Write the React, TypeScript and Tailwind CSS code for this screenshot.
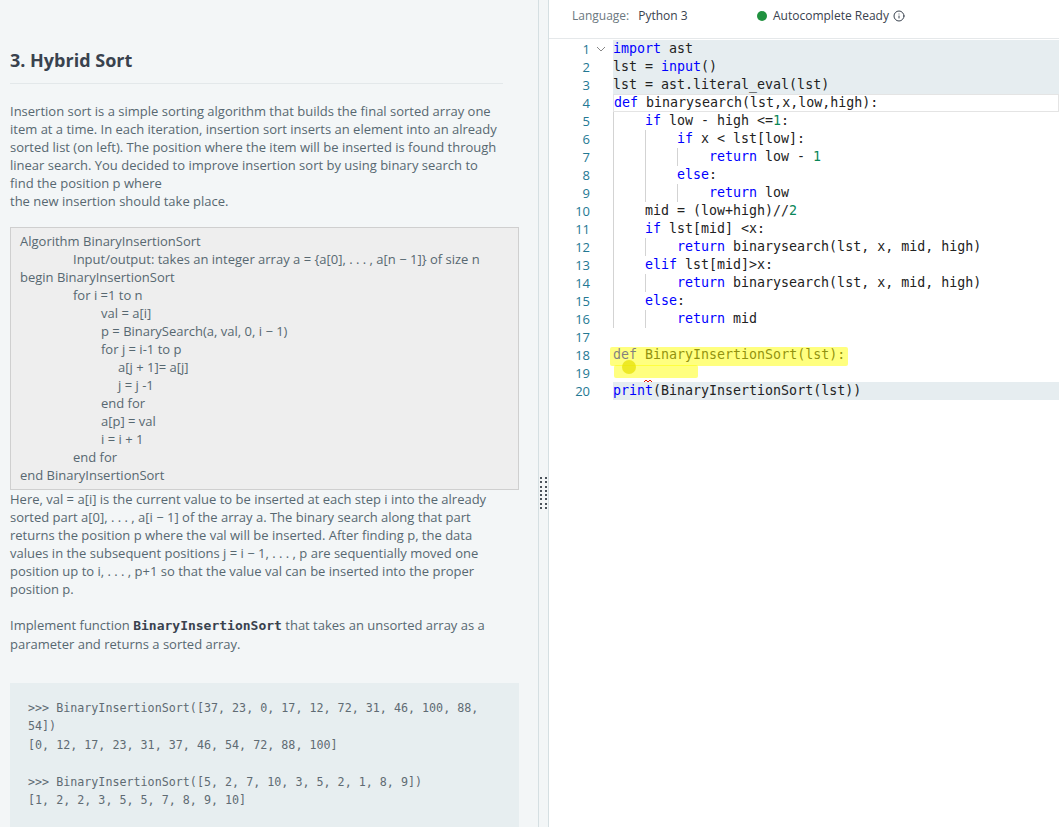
import React from "react";
import { Info } from "lucide-react";

type Seg = [string, "k" | "n" | "t"];
type Line = { indent: number; segs: Seg[]; cls?: string; fold?: boolean };

const L = (indent: number, ...segs: Seg[]): Line => ({ indent, segs });

const lines: Line[] = [
  { ...L(0, ["import", "k"], [" ast", "t"]), fold: true, cls: "bg-[#e6edf0]" },
  { ...L(0, ["lst = ", "t"], ["input", "k"], ["()", "t"]), cls: "bg-[#e6edf0]" },
  { ...L(0, ["lst = ast.literal_eval(lst)", "t"]), cls: "bg-[#e6edf0]" },
  { ...L(0, ["def", "k"], [" binarysearch(lst,x,low,high):", "t"]), cls: "border border-[#e4e4e4]" },
  L(1, ["if", "k"], [" low - high <=", "t"], ["1", "n"], [":", "t"]),
  L(2, ["if", "k"], [" x < lst[low]:", "t"]),
  L(3, ["return", "k"], [" low - ", "t"], ["1", "n"]),
  L(2, ["else", "k"], [":", "t"]),
  L(3, ["return", "k"], [" low", "t"]),
  L(1, ["mid = (low+high)//", "t"], ["2", "n"]),
  L(1, ["if", "k"], [" lst[mid] <x:", "t"]),
  L(2, ["return", "k"], [" binarysearch(lst, x, mid, high)", "t"]),
  L(1, ["elif", "k"], [" lst[mid]>x:", "t"]),
  L(2, ["return", "k"], [" binarysearch(lst, x, mid, high)", "t"]),
  L(1, ["else", "k"], [":", "t"]),
  L(2, ["return", "k"], [" mid", "t"]),
  L(0),
  L(0, ["def", "k"], [" BinaryInsertionSort(lst):", "t"]),
  L(0),
  { ...L(0, ["print", "k"], ["(BinaryInsertionSort(lst))", "t"]), cls: "bg-[#e6edf0]" },
];

const segCls = { k: "text-[#0000ff]", n: "text-[#098658]", t: "text-[#222222]" };

function Editor() {
  return (
    <div className="relative pt-[1px] font-['DejaVu_Sans_Mono',monospace] text-[13.3px] leading-[18px]">
      {lines.map((ln, i) => (
        <div key={i} className="flex h-[18px]">
          <div className="flex w-[64px] shrink-0 items-center">
            <span className="w-[41px] text-right font-['Open_Sans',sans-serif] text-[13px] text-[#237893]">
              {i + 1}
            </span>
            <span className="flex w-[23px] items-center justify-center text-[#8a8a8a]">
              {ln.fold && (
                <svg width="10" height="6" viewBox="0 0 10 6" className="ml-[-2px]">
                  <path d="M1 1 L5 5 L9 1" fill="none" stroke="#888" strokeWidth="1" />
                </svg>
              )}
            </span>
          </div>
          <div className={`flex h-[18px] flex-1 items-center whitespace-pre ${ln.cls ?? ""}`}>
            {Array.from({ length: ln.indent }).map((_, j) => (
              <span key={j} className="inline-block h-[18px] w-[32px] border-l border-[#d3d3d3]" />
            ))}
            {ln.segs.map(([t, c], j) => (
              <span key={j} className={segCls[c]}>
                {t}
              </span>
            ))}
          </div>
        </div>
      ))}
      {/* yellow marker highlight */}
      <div className="pointer-events-none absolute left-[61px] top-[308px] h-[19px] w-[238px] rounded-[2px] bg-[#ffff00]/50" />
      <div className="pointer-events-none absolute left-[65px] top-[326px] h-[13px] w-[84px] rounded-[2px] bg-[#ffff00]/50" />
      <div className="pointer-events-none absolute left-[73px] top-[321px] h-[14px] w-[14px] rounded-full bg-[#e6e000]/70" />
      <svg className="absolute left-[95px] top-[340px]" width="8" height="4" viewBox="0 0 8 4">
        <path d="M0 3 L2 1 L4 3 L6 1 L8 3" fill="none" stroke="#e51400" strokeWidth="1" />
      </svg>
    </div>
  );
}

const algo: [number, string][] = [
  [0, "Algorithm BinaryInsertionSort"],
  [53, "Input/output: takes an integer array a = {a[0], . . . , a[n − 1]} of size n"],
  [0, "begin BinaryInsertionSort"],
  [53, "for i =1 to n"],
  [81, "val = a[i]"],
  [81, "p = BinarySearch(a, val, 0, i − 1)"],
  [81, "for j = i-1 to p"],
  [98, "a[j + 1]= a[j]"],
  [98, "j = j -1"],
  [81, "end for"],
  [81, "a[p] = val"],
  [81, "i = i + 1"],
  [53, "end for"],
  [0, "end BinaryInsertionSort"],
];

export default function App() {
  return (
    <div className="flex h-[827px] w-[1059px] overflow-hidden bg-white">
      {/* Left problem panel */}
      <div className="w-[538px] shrink-0 bg-[#f3f6f7] pl-[10px] pr-[19px] font-['Open_Sans',sans-serif] text-[13px] leading-[18px] text-[#576871]">
        <h2 className="mt-[48px] text-[18px] font-bold leading-[24px] text-[#39424e]">3. Hybrid Sort</h2>
        <div className="mr-[16px] mt-[11px] border-t border-[#e3e8ea]" />
        <div className="mt-[18px] whitespace-nowrap">
          <div>Insertion sort is a simple sorting algorithm that builds the final sorted array one</div>
          <div>item at a time. In each iteration, insertion sort inserts an element into an already</div>
          <div>sorted list (on left). The position where the item will be inserted is found through</div>
          <div>linear search. You decided to improve insertion sort by using binary search to</div>
          <div>find the position p where</div>
          <div>the new insertion should take place.</div>
        </div>
        <div className="mt-[17px] whitespace-nowrap border border-[#cfcfcf] bg-[#eeeeee] pb-[5px] pl-[9px] pt-[4px]">
          {algo.map(([p, t], i) => (
            <div key={i} style={{ paddingLeft: p }}>
              {t}
            </div>
          ))}
        </div>
        <div className="whitespace-nowrap">
          <div>Here, val = a[i] is the current value to be inserted at each step i into the already</div>
          <div>sorted part a[0], . . . , a[i − 1] of the array a. The binary search along that part</div>
          <div>returns the position p where the val will be inserted. After finding p, the data</div>
          <div>values in the subsequent positions j = i − 1, . . . , p are sequentially moved one</div>
          <div>position up to i, . . . , p+1 so that the value val can be inserted into the proper</div>
          <div>position p.</div>
        </div>
        <div className="mt-[18px] whitespace-nowrap">
          <div>
            Implement function{" "}
            <code className="font-['DejaVu_Sans_Mono',monospace] text-[13px] font-bold text-[#39424e]">
              BinaryInsertionSort
            </code>{" "}
            that takes an unsorted array as a
          </div>
          <div>parameter and returns a sorted array.</div>
        </div>
        <div className="mt-[30px] h-[200px] whitespace-pre bg-[#e7eef0] pl-[18px] pt-[16px] font-['DejaVu_Sans_Mono',monospace] text-[11.7px] leading-[18.4px] text-[#5f6b73]">
          <div>{">>> BinaryInsertionSort([37, 23, 0, 17, 12, 72, 31, 46, 100, 88,"}</div>
          <div>{"54])"}</div>
          <div>{"[0, 12, 17, 23, 31, 37, 46, 54, 72, 88, 100]"}</div>
          <div>{"\u00a0"}</div>
          <div>{">>> BinaryInsertionSort([5, 2, 7, 10, 3, 5, 2, 1, 8, 9])"}</div>
          <div>{"[1, 2, 2, 3, 5, 5, 7, 8, 9, 10]"}</div>
        </div>
      </div>

      {/* Divider */}
      <div className="flex w-[11px] shrink-0 flex-col items-center border-x border-[#d5dfe2] bg-[#f3f6f7] pt-[477px]">
        <div className="grid grid-cols-2 gap-x-[2.3px] gap-y-[2.3px]">
          {Array.from({ length: 16 }).map((_, i) => (
            <span key={i} className="h-[2px] w-[2px] bg-[#4a525a]" />
          ))}
        </div>
      </div>

      {/* Right editor panel */}
      <div className="flex-1 bg-white">
        <div className="flex h-[39px] items-center border-b border-[#e5e8ea] pb-[6px] pl-[23px] font-['Open_Sans',sans-serif] text-[12px]">
          <div className="flex w-[185px] items-center">
            <span className="text-[#6b7880]">Language:</span>
            <span className="ml-[9px] text-[#39424e]">Python 3</span>
          </div>
          <span className="h-[10px] w-[10px] rounded-full bg-[#20913f]" />
          <span className="ml-[6px] text-[#39424e]">Autocomplete Ready</span>
          <Info className="ml-[4px] text-[#39424e]" size={12} strokeWidth={2} />
        </div>
        <Editor />
      </div>
    </div>
  );
}
